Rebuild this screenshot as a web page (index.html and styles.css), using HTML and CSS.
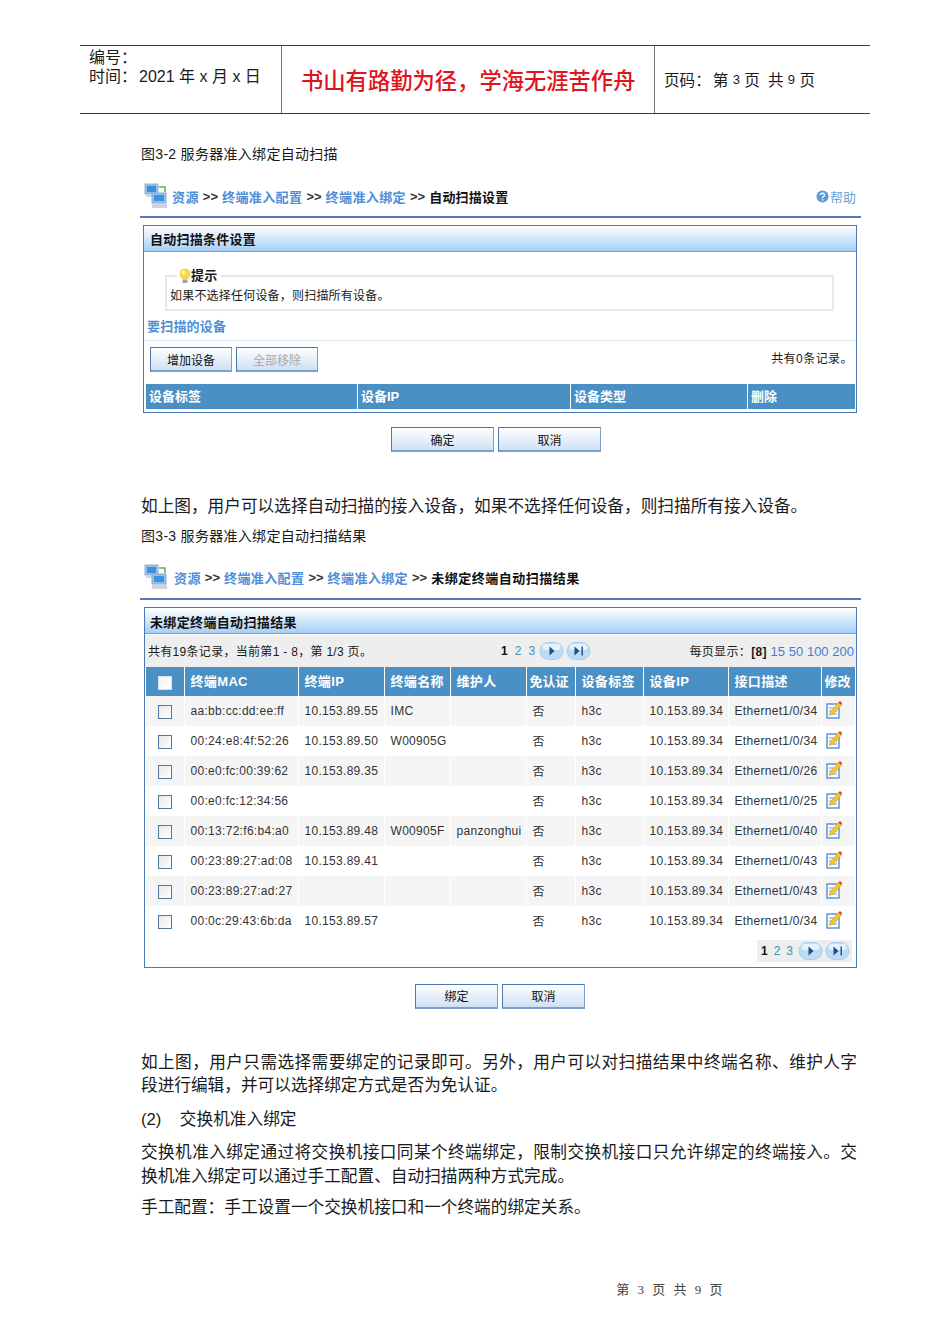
FILE: index.html
```html
<!DOCTYPE html>
<html lang="zh-CN">
<head>
<meta charset="utf-8">
<title>服务器准入绑定</title>
<link rel="stylesheet" href="styles.css">
</head>
<body>
<svg class="defs" width="0" height="0" aria-hidden="true">
  <defs>
    <symbol id="i-monitor" viewBox="0 0 24 26">
      <rect x="1" y="1" width="13" height="10" fill="#8fc0ea" stroke="#9ab2cf"/>
      <rect x="3" y="3" width="9" height="6" fill="#3f8fdc"/>
      <rect x="2" y="12" width="11" height="2" fill="#d3d7df"/>
      <path d="M15 4h6v5" fill="none" stroke="#5cb45c" stroke-width="1.600"/>
      <rect x="8" y="10" width="14" height="10" fill="#8cc4ee" stroke="#8ea8c6"/>
      <rect x="10" y="12" width="10" height="6" fill="#3a92e0"/>
      <rect x="8" y="21" width="15" height="4" fill="#cfd3dd"/>
    </symbol>
    <symbol id="i-edit" viewBox="0 0 16 18">
      <rect x="1" y="3" width="12" height="14" fill="#fff" stroke="#5f94d6" stroke-width="1.500"/>
      <path d="M3 7h8M3 10h8M3 13h8" stroke="#6d9ad6" stroke-width="1"/>
      <path d="M3.500 14.500l1-4 8-9 3 2.500-8 9z" fill="#f2c531" stroke="#c79a18" stroke-width=".5"/>
      <path d="M12.500 1.500l1.500-1.500 2 2-.5 2z" fill="#d8372c"/>
    </symbol>
    <symbol id="i-next" viewBox="0 0 24 18">
      <rect x=".5" y=".5" width="23" height="17" rx="8.500" fill="#bcdcf6" stroke="#a9cdec"/>
      <rect x="3" y="2" width="18" height="6" rx="3" fill="#e4f2fc"/>
      <path d="M10 4.500l5 4.500-5 4.500z" fill="#1d4f86"/>
    </symbol>
    <symbol id="i-last" viewBox="0 0 24 18">
      <rect x=".5" y=".5" width="23" height="17" rx="8.500" fill="#bcdcf6" stroke="#a9cdec"/>
      <rect x="3" y="2" width="18" height="6" rx="3" fill="#e4f2fc"/>
      <path d="M8 4.500l5 4.500-5 4.500z" fill="#1d4f86"/>
      <rect x="15" y="4.500" width="1.400" height="9" fill="#1d4f86"/>
    </symbol>
  </defs>
</svg>

<header class="doc-head">
  <div class="head-cell head-left">
    <div>编号：</div>
    <div><span class="head-label">时间：</span>2021 年 x 月 x 日</div>
  </div>
  <div class="head-cell head-mid">书山有路勤为径，学海无涯苦作舟</div>
  <div class="head-cell head-right"><span class="head-label">页码：</span><span>第 </span><span class="small">3</span><span> 页</span><span class="gap"></span><span>共 </span><span class="small">9</span><span> 页</span></div>
</header>

<main class="doc">
  <p class="caption cap-one">图3-2 服务器准入绑定自动扫描</p>

  <div class="crumb crumb-one">
    <svg class="crumb-icon"><use href="#i-monitor"/></svg>
    <a class="crumb-link">资源</a><b class="sep">&gt;&gt;</b>
    <a class="crumb-link">终端准入配置</a><b class="sep">&gt;&gt;</b>
    <a class="crumb-link">终端准入绑定</a><b class="sep">&gt;&gt;</b>
    <b class="crumb-now">自动扫描设置</b>
    <span class="help">
      <svg class="help-icon" viewBox="0 0 14 14"><circle cx="7" cy="7" r="6.500" fill="#5b9bd8"/><path d="M4.800 5.400a2.200 2 0 1 1 3.300 1.800c-.8.500-1.100.8-1.100 1.500" fill="none" stroke="#fff" stroke-width="1.500"/><rect x="6.200" y="9.800" width="1.600" height="1.600" fill="#fff"/></svg>帮助
    </span>
  </div>

  <section class="panel panel-one">
    <h2 class="panel-title">自动扫描条件设置</h2>
    <fieldset class="tip">
      <legend class="tip-legend">
        <svg class="bulb" viewBox="0 0 12 16"><circle cx="6" cy="6" r="5.500" fill="#f7d64a"/><circle cx="4.500" cy="4.500" r="2" fill="#fdf3b0"/><rect x="3.500" y="11.500" width="5" height="3.500" fill="#9aa6a8"/></svg>提示
      </legend>
      如果不选择任何设备，则扫描所有设备。
    </fieldset>
    <h3 class="sub-title">要扫描的设备</h3>
    <div class="action-row">
      <button class="btn btn-add">增加设备</button>
      <button class="btn btn-add btn-off">全部移除</button>
      <span class="count">共有0条记录。</span>
    </div>
    <div class="empty-head">
      <span class="eh-a">设备标签</span>
      <span class="eh-b">设备IP</span>
      <span class="eh-c">设备类型</span>
      <span class="eh-d">删除</span>
    </div>
  </section>

  <div class="form-btns btns-one">
    <button class="btn btn-wide">确定</button>
    <button class="btn btn-wide">取消</button>
  </div>

  <p class="para para-a">如上图，用户可以选择自动扫描的接入设备，如果不选择任何设备，则扫描所有接入设备。</p>
  <p class="caption cap-two">图3-3 服务器准入绑定自动扫描结果</p>

  <div class="crumb crumb-two">
    <svg class="crumb-icon"><use href="#i-monitor"/></svg>
    <a class="crumb-link">资源</a><b class="sep">&gt;&gt;</b>
    <a class="crumb-link">终端准入配置</a><b class="sep">&gt;&gt;</b>
    <a class="crumb-link">终端准入绑定</a><b class="sep">&gt;&gt;</b>
    <b class="crumb-now">未绑定终端自动扫描结果</b>
  </div>

  <section class="panel panel-two">
    <h2 class="panel-title">未绑定终端自动扫描结果</h2>
    <div class="toolbar">
      <span class="tb-left">共有19条记录，当前第1 - 8，第 1/3 页。</span>
      <span class="pager tb-pager">
        <b>1</b><a>2</a><a>3</a>
        <svg class="pg-btn"><use href="#i-next"/></svg><svg class="pg-btn"><use href="#i-last"/></svg>
      </span>
      <span class="tb-right">每页显示：<b>[8]</b> <a>15</a> <a>50</a> <a>100</a> <a>200</a></span>
    </div>
    <table class="grid">
      <colgroup>
        <col class="c1"><col class="c2"><col class="c3"><col class="c4"><col class="c5">
        <col class="c6"><col class="c7"><col class="c8"><col class="c9"><col class="c10">
      </colgroup>
      <thead>
        <tr>
          <th class="chk"><span class="box box-head"></span></th>
          <th>终端MAC</th><th>终端IP</th><th>终端名称</th><th>维护人</th>
          <th class="tight">免认证</th><th>设备标签</th><th>设备IP</th><th>接口描述</th><th class="tight">修改</th>
        </tr>
      </thead>
      <tbody>
        <tr><td class="chk"><span class="box"></span></td><td>aa:bb:cc:dd:ee:ff</td><td>10.153.89.55</td><td>IMC</td><td></td><td>否</td><td>h3c</td><td>10.153.89.34</td><td>Ethernet1/0/34</td><td class="ed"><svg class="edit"><use href="#i-edit"/></svg></td></tr>
        <tr><td class="chk"><span class="box"></span></td><td>00:24:e8:4f:52:26</td><td>10.153.89.50</td><td>W00905G</td><td></td><td>否</td><td>h3c</td><td>10.153.89.34</td><td>Ethernet1/0/34</td><td class="ed"><svg class="edit"><use href="#i-edit"/></svg></td></tr>
        <tr><td class="chk"><span class="box"></span></td><td>00:e0:fc:00:39:62</td><td>10.153.89.35</td><td></td><td></td><td>否</td><td>h3c</td><td>10.153.89.34</td><td>Ethernet1/0/26</td><td class="ed"><svg class="edit"><use href="#i-edit"/></svg></td></tr>
        <tr><td class="chk"><span class="box"></span></td><td>00:e0:fc:12:34:56</td><td></td><td></td><td></td><td>否</td><td>h3c</td><td>10.153.89.34</td><td>Ethernet1/0/25</td><td class="ed"><svg class="edit"><use href="#i-edit"/></svg></td></tr>
        <tr><td class="chk"><span class="box"></span></td><td>00:13:72:f6:b4:a0</td><td>10.153.89.48</td><td>W00905F</td><td>panzonghui</td><td>否</td><td>h3c</td><td>10.153.89.34</td><td>Ethernet1/0/40</td><td class="ed"><svg class="edit"><use href="#i-edit"/></svg></td></tr>
        <tr><td class="chk"><span class="box"></span></td><td>00:23:89:27:ad:08</td><td>10.153.89.41</td><td></td><td></td><td>否</td><td>h3c</td><td>10.153.89.34</td><td>Ethernet1/0/43</td><td class="ed"><svg class="edit"><use href="#i-edit"/></svg></td></tr>
        <tr><td class="chk"><span class="box"></span></td><td>00:23:89:27:ad:27</td><td></td><td></td><td></td><td>否</td><td>h3c</td><td>10.153.89.34</td><td>Ethernet1/0/43</td><td class="ed"><svg class="edit"><use href="#i-edit"/></svg></td></tr>
        <tr><td class="chk"><span class="box"></span></td><td>00:0c:29:43:6b:da</td><td>10.153.89.57</td><td></td><td></td><td>否</td><td>h3c</td><td>10.153.89.34</td><td>Ethernet1/0/34</td><td class="ed"><svg class="edit"><use href="#i-edit"/></svg></td></tr>
      </tbody>
    </table>
    <div class="foot-pager">
      <span class="pager pager-shaded">
        <b>1</b><a>2</a><a>3</a>
        <svg class="pg-btn"><use href="#i-next"/></svg><svg class="pg-btn"><use href="#i-last"/></svg>
      </span>
    </div>
  </section>

  <div class="form-btns btns-two">
    <button class="btn btn-mid">绑定</button>
    <button class="btn btn-mid">取消</button>
  </div>

  <p class="para para-b">如上图，用户只需选择需要绑定的记录即可。另外，用户可以对扫描结果中终端名称、维护人字段进行编辑，并可以选择绑定方式是否为免认证。</p>
  <p class="para para-c">(2)&nbsp;&nbsp;&nbsp;&nbsp;交换机准入绑定</p>
  <p class="para para-d">交换机准入绑定通过将交换机接口同某个终端绑定，限制交换机接口只允许绑定的终端接入。交换机准入绑定可以通过手工配置、自动扫描两种方式完成。</p>
  <p class="para para-e">手工配置：手工设置一个交换机接口和一个终端的绑定关系。</p>
</main>

<footer class="doc-foot">第 3 页 共 9 页</footer>
</body>
</html>
```
FILE: styles.css
```css
* { box-sizing: border-box; }
html, body { margin: 0; padding: 0; }
body {
  width: 950px;
  height: 1344px;
  overflow: hidden;
  background: #fff;
  color: #1a1a1a;
  font-family: "Liberation Sans", "Noto Sans CJK SC", sans-serif;
}
.defs { display: block; height: 0; }

/* document header */
.doc-head {
  margin: 45px 80px 0;
  height: 69px;
  display: grid;
  grid-template-columns: 201px 374px 1fr;
  border-top: 1px solid #3a3a3a;
  border-bottom: 1px solid #3a3a3a;
  font-size: 16px;
}
.head-cell { padding-left: 9px; }
.head-left { padding-top: 2px; line-height: 19px; }
.head-label { margin-right: 2px; }
.head-mid {
  border-left: 1px solid #777;
  border-right: 1px solid #777;
  padding: 0 0 2px 19px;
  display: flex;
  align-items: center;
  color: #e0141c;
  font-size: 22.3px;
  font-weight: 500;
  white-space: nowrap;
}
.head-right { display: flex; align-items: center; white-space: pre; font-size: 15.6px; padding-bottom: 1px; }
.small { font-size: 13px; }
.gap { width: 8px; }

/* document flow */
.doc { padding-left: 141px; width: 861px; }
.caption { margin: 0; font-size: 14px; line-height: 20px; letter-spacing: .3px; }
.cap-one { margin-top: 30px; }
.cap-two { margin-top: 7px; }
.para { margin: 0; font-size: 16.67px; line-height: 23.5px; width: 716px; text-align: justify; }
.para-a { margin-top: 43px; }
.para-b { margin-top: 42px; }
.para-c { margin-top: 10px; }
.para-d { margin-top: 10px; }
.para-e { margin-top: 8px; }

/* breadcrumb */
.crumb {
  margin-left: -1px;
  width: 721px;
  display: flex;
  align-items: center;
  gap: 4px;
  font-size: 13px;
  border-bottom: 2px solid #4f7fb8;
  padding: 12px 5px 1px 4px;
  white-space: nowrap;
}
.crumb-one { height: 54px; padding-top: 13px; }
.crumb-one .crumb-icon { margin-right: 0; }
.crumb-two { height: 54px; }
.crumb-icon { width: 24px; height: 26px; margin-right: 2px; flex: none; }
.crumb-link { color: #4f8ed8; font-weight: 700; letter-spacing: .4px; }
.sep { color: #333; font-size: 13px; font-family: "Liberation Sans", sans-serif; }
.crumb-now { color: #111; letter-spacing: .2px; }
.crumb-two .crumb-now { letter-spacing: .5px; }
.help { margin-left: auto; color: #6e9fd0; display: flex; align-items: center; gap: 1px; }
.help-icon { width: 13px; height: 13px; }

/* panels */
.panel {
  margin-left: 2px;
  width: 714px;
  border: 1.5px solid #4a78b0;
  background: #fff;
}
.panel-one { margin-top: 7px; height: 188px; }
.panel-two { margin-left: 3px; margin-top: 7px; height: 361px; width: 713px; }
.panel-title {
  margin: 0;
  height: 26px;
  padding: 1px 0 0 6px;
  font-size: 13px;
  line-height: 26px;
  letter-spacing: .25px;
  font-weight: 700;
  color: #111;
  background: linear-gradient(#fff, #a6cff6);
  border-bottom: 1px solid #6d9fdc;
}
.panel-two .panel-title { padding: 2px 0 0 5px; letter-spacing: .35px; }

/* tip */
.tip {
  margin: 16px 22px 0 21px;
  padding: 3px 0 0 3px;
  height: 43px;
  border: 2px solid #e0ebf6;
  font-size: 12px;
  line-height: 18px;
  letter-spacing: .2px;
}
.tip-legend { margin-left: 7px; padding: 0 4px 0 2px; font-weight: 700; font-size: 13px; display: flex; align-items: center; line-height: 14px; }
.bulb { width: 12px; height: 16px; }
.sub-title {
  margin: 7px 0 0;
  padding: 0 0 0 3px;
  height: 23px;
  font-size: 13px;
  line-height: 18px;
  color: #4f8ed8;
  font-weight: 700;
  letter-spacing: .2px;
  border-bottom: 1px solid #d5e5f2;
}
.action-row {
  height: 43px;
  display: flex;
  align-items: flex-start;
  gap: 4px;
  padding: 6px 3px 0 6px;
}
.count { margin-left: auto; font-size: 12px; line-height: 24px; letter-spacing: .45px; }
.btn {
  font-family: inherit;
  font-size: 12px;
  color: #111;
  padding: 0;
  border: 1px solid #4a78b0;
  border-right-color: #7da0c8;
  border-bottom: 2px solid #7da0c8;
  background: linear-gradient(#fff, #cfe0f4);
}
.btn-add { width: 82px; height: 25px; }
.btn-off { color: #aaa; }
.empty-head {
  margin: 0 1px 0 2px;
  height: 25px;
  display: grid;
  grid-template-columns: 212px 213px 177px 1fr;
}
.empty-head span {
  background: #4a90c4;
  color: #fff;
  font-size: 13px;
  font-weight: 700;
  line-height: 25px;
  padding-left: 3px;
  border-right: 1px solid #fff;
}
.empty-head span:last-child { border-right: 0; }

.form-btns { display: flex; gap: 4px; width: 717px; }
.btns-one { margin-top: 14px; padding-left: 250px; }
.btns-two { margin-top: 16px; padding-left: 274px; }
.btn-wide { width: 103px; height: 25px; }
.btn-mid { width: 83px; height: 25px; }

/* toolbar */
.toolbar {
  margin-top: 1px;
  height: 32px;
  background: #eeeeee;
  display: grid;
  grid-template-columns: 353px 149px 1fr;
  align-items: center;
  font-size: 12px;
  padding: 0 2px 0 3px;
  white-space: nowrap;
}
.tb-left { letter-spacing: .3px; }
.tb-right { text-align: right; letter-spacing: .35px; }
.tb-right a { color: #3f7fd0; font-size: 13px; letter-spacing: 0; font-weight: 500; }
.tb-right b { font-weight: 700; }
.pager { display: inline-flex; align-items: center; font-size: 12px; }
.pager b { margin-right: 7px; color: #111; }
.pager a { color: #3c94b8; margin-right: 7px; }
.pager a + a { margin-right: 4px; }
.pg-btn { width: 25px; height: 18px; margin-right: 2px; }
.pg-btn + .pg-btn { margin-right: 0; }

/* table */
.grid {
  margin-left: 1px;
  width: 709px;
  table-layout: fixed;
  border-collapse: collapse;
  font-size: 12px;
}
.c1 { width: 38px; } .c2 { width: 114px; } .c3 { width: 86px; } .c4 { width: 66px; } .c5 { width: 76px; }
.c6 { width: 49px; } .c7 { width: 68px; } .c8 { width: 85px; } .c9 { width: 93px; } .c10 { width: 34px; }
.grid th {
  height: 29px;
  padding: 0 0 1px 6px;
  background: #4a90c4;
  color: #fff;
  text-align: left;
  font-size: 13px;
  letter-spacing: .35px;
  border-right: 1px solid #fff;
}
.grid th:last-child { border-right: 0; }
.grid th.tight { padding-left: 3px; letter-spacing: 0; white-space: nowrap; }
.grid td {
  height: 30px;
  padding: 0 0 0 6px;
  color: #333;
  white-space: nowrap;
  overflow: hidden;
  border-right: 1px solid #fff;
  letter-spacing: .3px;
}
.grid td:last-child { border-right: 0; }
.grid tbody tr:nth-child(odd) td { background: #f5f5f5; }
.grid tbody tr:nth-child(even) td { background: #fff; }
.grid .chk { padding: 0; text-align: center; }
.box {
  display: inline-block;
  width: 14px;
  height: 14px;
  margin-top: 3px;
  vertical-align: middle;
  border: 1px solid #4f7a9e;
  background: linear-gradient(135deg, #e8e8e2, #fff);
}
.box-head { background: linear-gradient(135deg, #f4f4f4, #fff); border-color: #cfe0ee; }
.grid td.ed { padding: 0 0 2px 4px; }
.edit { width: 16px; height: 18px; display: block; }

.foot-pager { display: flex; justify-content: flex-end; padding: 4px 4px 0 0; }
.pager-shaded { background: #eeeeee; height: 22px; padding: 0 2px 0 4px; }
.pager-shaded b { margin-right: 6px; }
.pager-shaded a { margin-right: 6px; }
.pager-shaded a + a { margin-right: 5px; }

/* footer */
.doc-foot {
  margin-left: 390px;
  width: 560px;
  padding-top: 59px;
  text-align: center;
  font-family: "Liberation Serif", "Noto Sans CJK SC", serif;
  font-size: 13px;
  color: #444;
  white-space: pre;
  letter-spacing: 1px;
  word-spacing: 3px;
}
```
